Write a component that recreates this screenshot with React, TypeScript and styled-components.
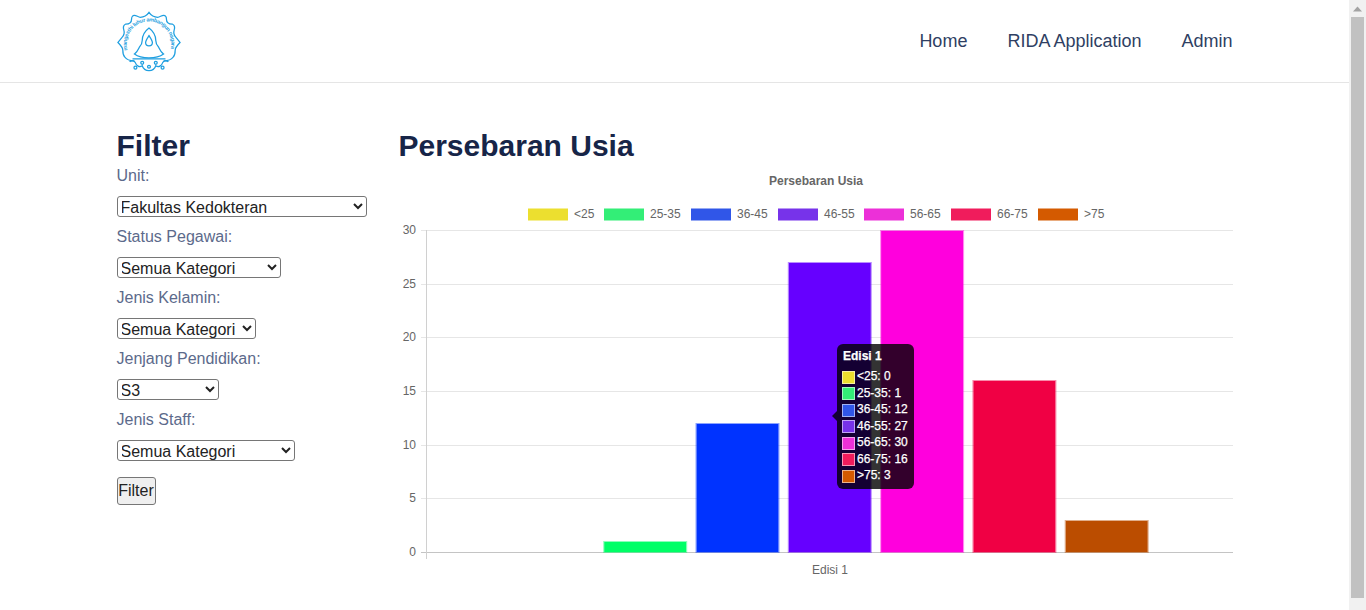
import styled, { createGlobalStyle } from "styled-components";

const GlobalStyle = createGlobalStyle`
  html, body {
    margin: 0;
    padding: 0;
    height: 610px;
    overflow: hidden;
    background: #fff;
    font-family: "Liberation Sans", Arial, sans-serif;
  }
`;

const Screen = styled.div`
  display: flex;
  height: 610px;
`;

const Page = styled.div`
  flex: 1;
  min-width: 0;
`;

const Scrollbar = styled.div`
  width: 17px;
  background: #f1f1f1;
  display: flex;
  flex-direction: column;
  align-items: center;
`;

const ScrollArrow = styled.div`
  height: 17px;
  display: flex;
  align-items: center;
  justify-content: center;
`;

const ScrollThumb = styled.div`
  width: 13px;
  height: 581px;
  background: #c1c1c1;
`;

const Header = styled.header`
  height: 82px;
  border-bottom: 1px solid #e5e5e5;
  padding: 0 116.5px;
  display: flex;
  align-items: center;
  justify-content: space-between;
`;

const Logo = styled.svg`
  width: 64px;
  height: 63px;
  margin-top: 1px;
`;

const Nav = styled.nav`
  display: flex;
  gap: 40px;
`;

const NavLink = styled.a`
  color: #2f3f63;
  font-size: 18px;
  text-decoration: none;
`;

const Content = styled.main`
  display: flex;
  padding: 43px 116.5px 0;
`;

const Sidebar = styled.aside`
  width: 282px;
  flex: none;
`;

const Heading = styled.h2`
  margin: 0;
  color: #172548;
  font-size: 30px;
  line-height: 40px;
  font-weight: 700;
`;

const FilterForm = styled.form`
  display: flex;
  flex-direction: column;
  align-items: flex-start;
`;

const FilterLabel = styled.label`
  color: #5c6a8b;
  font-size: 16px;
  line-height: 20px;
  margin-bottom: 10px;
  margin-top: 10px;
  &:first-child {
    margin-top: 0;
  }
`;

const FilterSelect = styled.select<{ $width: number }>`
  width: ${(p) => p.$width}px;
  height: 21px;
  font-family: "Liberation Sans", Arial, sans-serif;
  font-size: 16px;
  color: #222;
  background: #fff;
  border: 1px solid #767676;
  border-radius: 3px;
  padding: 1px 0 0;
  text-indent: -1px;
`;

const FilterButton = styled.button`
  margin-top: 16px;
  width: 39px;
  height: 28px;
  padding: 0;
  font-family: "Liberation Sans", Arial, sans-serif;
  font-size: 16px;
  color: #222;
  background: #efefef;
  border: 1px solid #767676;
  border-radius: 3px;
`;

const ChartColumn = styled.section`
  flex: 1;
  min-width: 0;
`;

const ChartFrame = styled.div`
  position: relative;
  height: 420px;
  margin-top: -1px;
`;

const ChartSvg = styled.svg`
  display: block;
  width: 834px;
  height: 420px;
  font-family: "Liberation Sans", Arial, sans-serif;
`;

const Tooltip = styled.div`
  position: absolute;
  left: 438.5px;
  top: 179px;
  width: 76.5px;
  height: 145px;
  box-sizing: border-box;
  padding: 6px;
  border-radius: 6px;
  background: rgba(0, 0, 0, 0.8);
  color: #fff;
  font-size: 12px;
  -webkit-text-stroke: 0.25px #fff;
  &::before {
    content: "";
    position: absolute;
    left: -5px;
    top: 67px;
    border: 5px solid transparent;
    border-left: 0;
    border-right-color: rgba(0, 0, 0, 0.8);
  }
`;

const TooltipTitle = styled.div`
  font-weight: 700;
  line-height: 12px;
  margin-bottom: 6px;
`;

const TooltipRow = styled.div`
  display: flex;
  align-items: center;
  gap: 2px;
  height: 16.5px;
  line-height: 12px;
  margin-left: -1px;
  white-space: nowrap;
`;

const Swatch = styled.span<{ $color: string }>`
  width: 13px;
  height: 13px;
  margin-top: 2px;
  box-sizing: border-box;
  flex: none;
  background: ${(p) => p.$color};
  border: 1px solid rgba(255, 255, 255, 0.55);
`;

const series = [
  { label: "<25", value: 0, fill: "#ecdf2f", bar: "#f5e400", x: 129 },
  { label: "25-35", value: 1, fill: "#33ee77", bar: "#00ff66", x: 205 },
  { label: "36-45", value: 12, fill: "#3056e8", bar: "#0033ff", x: 292 },
  { label: "46-55", value: 27, fill: "#7733ea", bar: "#6600ff", x: 379 },
  { label: "56-65", value: 30, fill: "#ec30d8", bar: "#ff00dd", x: 465 },
  { label: "66-75", value: 16, fill: "#f01c5c", bar: "#f00044", x: 552 },
  { label: ">75", value: 3, fill: "#d45a00", bar: "#bb4d00", x: 639 },
];

const plotLeft = 28;
const plotRight = 834;
const plotTop = 65;
const plotBottom = 387;
const ticks = [0, 5, 10, 15, 20, 25, 30];
const barStep = 92.3;
const barLeft = 112.4;
const barWidth = 84;

const Chart = () => {
  const yFor = (v: number) => plotBottom - (v / 30) * (plotBottom - plotTop);
  return (
    <ChartSvg viewBox="0 0 834 420">
      <text x="417" y="20" textAnchor="middle" fontSize="12" fontWeight="700" fill="#666">
        Persebaran Usia
      </text>
      {series.map((s) => (
        <g key={s.label}>
          <rect x={s.x} y="43.5" width="40" height="12" fill={s.fill} />
          <text x={s.x + 46} y="53" fontSize="12" fill="#666">
            {s.label}
          </text>
        </g>
      ))}
      {ticks.map((t) => (
        <g key={t}>
          <line
            x1={plotLeft - 6}
            x2={plotRight}
            y1={Math.round(yFor(t)) + 0.5}
            y2={Math.round(yFor(t)) + 0.5}
            stroke={t === 0 ? "#c4c4c4" : "#e6e6e6"}
          />
          <text x="17" y={yFor(t) + 4} textAnchor="end" fontSize="12" fill="#666">
            {t}
          </text>
        </g>
      ))}
      <line x1={plotLeft - 0.5} x2={plotLeft - 0.5} y1={plotTop} y2={plotBottom + 7} stroke="#d0d0d0" />
      {series
        .filter((s) => s.value > 0)
        .map((s) => {
          const x = barLeft + series.indexOf(s) * barStep - 0.5;
          const top = Math.round(yFor(s.value));
          return (
            <g key={s.label}>
              <rect x={x + 0.5} y={top + 0.5} width={barWidth - 1} height={plotBottom - top} fill="none" stroke={s.bar} strokeOpacity="0.45" />
              <rect x={x + 1} y={top + 1} width={barWidth - 2} height={plotBottom - top - 1} fill={s.bar} />
            </g>
          );
        })}
      <text x="431" y="409" textAnchor="middle" fontSize="12" fill="#666">
        Edisi 1
      </text>
    </ChartSvg>
  );
};

const LogoMark = () => (
  <Logo viewBox="0 0 66 64" fill="none" stroke="#1f9fe0" strokeWidth="1.3">
    <defs>
      <path id="logo-motto" d="M11 41a23 23 0 1 1 44 0" />
    </defs>
    <path d="M18 52c-4 0-8-1-10-4-2-2-2-4-2-7 0-3-2-5-5-8l4-5c2-2 3-5 2-8-1-3 0-5 2-6 4 0 6-2 6-5 0-2 1-4 3-4 2 0 4 2 6 2 4 0 7-2 9-5 2 3 5 5 9 5 2 0 4-2 6-2 2 0 3 2 3 4 0 3 2 5 6 5 2 1 3 3 2 6-1 3 0 6 2 8l4 5c-3 3-5 5-5 8 0 3 0 5-2 7-2 3-6 4-10 4" />
    <text fontSize="5.6" fill="#1f9fe0" stroke="none" fontFamily="Liberation Sans, sans-serif" fontWeight="700">
      <textPath href="#logo-motto" textLength="84">
        mangesthi luhur ambangun nagara
      </textPath>
    </text>
    <path d="M33 18c4 3 7 8 7 13 0 3 1 5 3 7 1 2 2 5 5 7-4 3-9 4-15 4s-11-1-15-4c3-2 4-5 5-7 2-2 3-4 3-7 0-5 3-10 7-13z" fill="#fff" />
    <path d="M33 26c2 3 3.500 5 3.500 7a3.500 3.500 0 0 1-7 0c0-2 1.500-4 3.500-7z" />
    <path d="M16 50h34M13 53c2-2 5-1 6 1 1 3 4 5 7 3 1 3 4 5 7 5s6-2 7-5c3 2 6 0 7-3 1-2 4-3 6-1" />
    <circle cx="19" cy="59" r="1.500" />
    <circle cx="26" cy="54" r="1.500" />
    <circle cx="33" cy="58" r="1.500" />
    <circle cx="40" cy="54" r="1.500" />
    <circle cx="47" cy="59" r="1.500" />
  </Logo>
);

export default function App() {
  return (
    <>
      <GlobalStyle />
      <Screen>
        <Page>
          <Header>
            <LogoMark />
            <Nav>
              <NavLink href="#home">Home</NavLink>
              <NavLink href="#rida">RIDA Application</NavLink>
              <NavLink href="#admin">Admin</NavLink>
            </Nav>
          </Header>
          <Content>
            <Sidebar>
              <Heading>Filter</Heading>
              <FilterForm>
                <FilterLabel>Unit:</FilterLabel>
                <FilterSelect $width={250}>
                  <option>Fakultas Kedokteran</option>
                </FilterSelect>
                <FilterLabel>Status Pegawai:</FilterLabel>
                <FilterSelect $width={164}>
                  <option>Semua Kategori</option>
                </FilterSelect>
                <FilterLabel>Jenis Kelamin:</FilterLabel>
                <FilterSelect $width={139}>
                  <option>Semua Kategori</option>
                </FilterSelect>
                <FilterLabel>Jenjang Pendidikan:</FilterLabel>
                <FilterSelect $width={102}>
                  <option>S3</option>
                </FilterSelect>
                <FilterLabel>Jenis Staff:</FilterLabel>
                <FilterSelect $width={178}>
                  <option>Semua Kategori</option>
                </FilterSelect>
                <FilterButton type="button">Filter</FilterButton>
              </FilterForm>
            </Sidebar>
            <ChartColumn>
              <Heading>Persebaran Usia</Heading>
              <ChartFrame>
                <Chart />
                <Tooltip>
                  <TooltipTitle>Edisi 1</TooltipTitle>
                  {series.map((s) => (
                    <TooltipRow key={s.label}>
                      <Swatch $color={s.fill} />
                      {s.label}: {s.value}
                    </TooltipRow>
                  ))}
                </Tooltip>
              </ChartFrame>
            </ChartColumn>
          </Content>
        </Page>
        <Scrollbar>
          <ScrollArrow>
            <svg width="9" height="6" viewBox="0 0 9 6">
              <path d="M4.500 0.500 9 5.500H0z" fill="#a3a3a3" />
            </svg>
          </ScrollArrow>
          <ScrollThumb />
        </Scrollbar>
      </Screen>
    </>
  );
}
